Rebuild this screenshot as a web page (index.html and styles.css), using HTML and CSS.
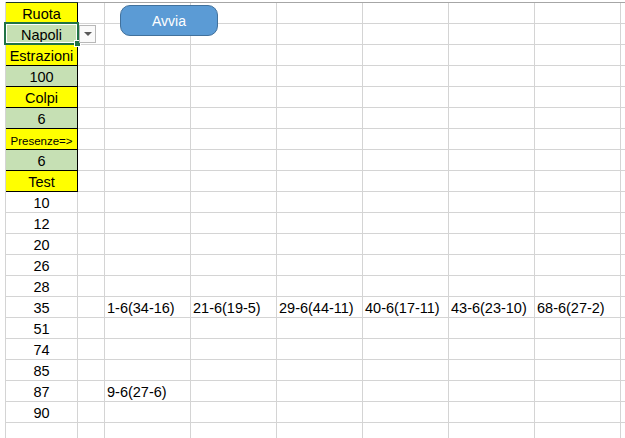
FILE: index.html
```html
<!DOCTYPE html>
<html lang="it">
<head>
    <meta charset="UTF-8">
    <title>Lotto - Presenze</title>
    <link rel="stylesheet" href="styles.css">
</head>
<body>
    <div class="sheet">
        <div class="grid">
            <div class="cell y first">Ruota</div><div class="cell"></div><div class="cell"></div><div class="cell"></div><div class="cell"></div><div class="cell"></div><div class="cell"></div><div class="cell"></div><div class="cell"></div>
            <div class="cell g">Napoli</div><div class="cell"></div><div class="cell"></div><div class="cell"></div><div class="cell"></div><div class="cell"></div><div class="cell"></div><div class="cell"></div><div class="cell"></div>
            <div class="cell y">Estrazioni</div><div class="cell"></div><div class="cell"></div><div class="cell"></div><div class="cell"></div><div class="cell"></div><div class="cell"></div><div class="cell"></div><div class="cell"></div>
            <div class="cell g">100</div><div class="cell"></div><div class="cell"></div><div class="cell"></div><div class="cell"></div><div class="cell"></div><div class="cell"></div><div class="cell"></div><div class="cell"></div>
            <div class="cell y">Colpi</div><div class="cell"></div><div class="cell"></div><div class="cell"></div><div class="cell"></div><div class="cell"></div><div class="cell"></div><div class="cell"></div><div class="cell"></div>
            <div class="cell g">6</div><div class="cell"></div><div class="cell"></div><div class="cell"></div><div class="cell"></div><div class="cell"></div><div class="cell"></div><div class="cell"></div><div class="cell"></div>
            <div class="cell y small">Presenze=&gt;</div><div class="cell"></div><div class="cell"></div><div class="cell"></div><div class="cell"></div><div class="cell"></div><div class="cell"></div><div class="cell"></div><div class="cell"></div>
            <div class="cell g">6</div><div class="cell"></div><div class="cell"></div><div class="cell"></div><div class="cell"></div><div class="cell"></div><div class="cell"></div><div class="cell"></div><div class="cell"></div>
            <div class="cell y">Test</div><div class="cell"></div><div class="cell"></div><div class="cell"></div><div class="cell"></div><div class="cell"></div><div class="cell"></div><div class="cell"></div><div class="cell"></div>
            <div class="cell num">10</div><div class="cell"></div><div class="cell"></div><div class="cell"></div><div class="cell"></div><div class="cell"></div><div class="cell"></div><div class="cell"></div><div class="cell"></div>
            <div class="cell num">12</div><div class="cell"></div><div class="cell"></div><div class="cell"></div><div class="cell"></div><div class="cell"></div><div class="cell"></div><div class="cell"></div><div class="cell"></div>
            <div class="cell num">20</div><div class="cell"></div><div class="cell"></div><div class="cell"></div><div class="cell"></div><div class="cell"></div><div class="cell"></div><div class="cell"></div><div class="cell"></div>
            <div class="cell num">26</div><div class="cell"></div><div class="cell"></div><div class="cell"></div><div class="cell"></div><div class="cell"></div><div class="cell"></div><div class="cell"></div><div class="cell"></div>
            <div class="cell num">28</div><div class="cell"></div><div class="cell"></div><div class="cell"></div><div class="cell"></div><div class="cell"></div><div class="cell"></div><div class="cell"></div><div class="cell"></div>
            <div class="cell num">35</div><div class="cell"></div><div class="cell">1-6(34-16)</div><div class="cell">21-6(19-5)</div><div class="cell">29-6(44-11)</div><div class="cell">40-6(17-11)</div><div class="cell">43-6(23-10)</div><div class="cell">68-6(27-2)</div><div class="cell"></div>
            <div class="cell num">51</div><div class="cell"></div><div class="cell"></div><div class="cell"></div><div class="cell"></div><div class="cell"></div><div class="cell"></div><div class="cell"></div><div class="cell"></div>
            <div class="cell num">74</div><div class="cell"></div><div class="cell"></div><div class="cell"></div><div class="cell"></div><div class="cell"></div><div class="cell"></div><div class="cell"></div><div class="cell"></div>
            <div class="cell num">85</div><div class="cell"></div><div class="cell"></div><div class="cell"></div><div class="cell"></div><div class="cell"></div><div class="cell"></div><div class="cell"></div><div class="cell"></div>
            <div class="cell num">87</div><div class="cell"></div><div class="cell">9-6(27-6)</div><div class="cell"></div><div class="cell"></div><div class="cell"></div><div class="cell"></div><div class="cell"></div><div class="cell"></div>
            <div class="cell num">90</div><div class="cell"></div><div class="cell"></div><div class="cell"></div><div class="cell"></div><div class="cell"></div><div class="cell"></div><div class="cell"></div><div class="cell"></div>
            <div class="cell"></div><div class="cell"></div><div class="cell"></div><div class="cell"></div><div class="cell"></div><div class="cell"></div><div class="cell"></div><div class="cell"></div><div class="cell"></div>
        </div>

        <!-- oggetti sopra il foglio -->
        <div class="selection"></div>
        <div class="handle"></div>
        <div class="dropdown"><span class="arrow"></span></div>
        <button class="avvia">Avvia</button>
    </div>
</body>
</html>
```

FILE: styles.css
```css
body {
    margin: 0;
    background: #fff;
    overflow: hidden;
    font-family: "Liberation Sans", Arial, sans-serif;
}
.sheet {
    position: relative;
    width: 625px;
    height: 438px;
    overflow: hidden;
}
.grid {
    display: grid;
    grid-template-columns: 72px 27px repeat(7, 86px);
    grid-auto-rows: 21px;
    margin: 2px 0 0 5px;
    border-top: 1px solid #a6a6a6;
    border-left: 1px solid #d4d4d4;
    width: max-content;
}
.cell {
    box-sizing: border-box;
    border-right: 1px solid #d4d4d4;
    border-bottom: 1px solid #d4d4d4;
    padding: 2px 2px 0;
    font-size: 14.5px;
    line-height: 18px;
    color: #000;
    white-space: nowrap;
    overflow: hidden;
}
.y {
    background: #ffff00;
    border-right-color: #000;
    border-bottom-color: #000;
    text-align: center;
}
.g {
    background: #c6e0b4;
    border-right-color: #000;
    border-bottom-color: #000;
    text-align: center;
}
.first {
    box-shadow: 0 -1px 0 #1f3a2a;
}
.small {
    font-size: 11.5px;
    padding-top: 3px;
}
.num {
    text-align: center;
}
.selection {
    position: absolute;
    left: 4px;
    top: 22px;
    width: 75px;
    height: 23px;
    box-sizing: border-box;
    border: 2px solid #217346;
    box-shadow: inset 0 0 0 1px #fff;
}
.handle {
    position: absolute;
    left: 74px;
    top: 40px;
    width: 7px;
    height: 7px;
    box-sizing: border-box;
    background: #217346;
    border: 1px solid #fff;
}
.dropdown {
    position: absolute;
    left: 79px;
    top: 25px;
    width: 17px;
    height: 18px;
    box-sizing: border-box;
    border: 1px solid #b8b8b8;
    background: #fafafa;
    display: flex;
    align-items: center;
    justify-content: center;
}
.arrow {
    width: 0;
    height: 0;
    border-left: 4px solid transparent;
    border-right: 4px solid transparent;
    border-top: 4px solid #595959;
}
.avvia {
    position: absolute;
    left: 120px;
    top: 5px;
    width: 98px;
    height: 31px;
    box-sizing: border-box;
    border: 1px solid #41719c;
    border-radius: 10px;
    background: #5b9bd5;
    color: #fff;
    font-family: "Liberation Sans", Arial, sans-serif;
    font-size: 14px;
    padding: 0;
}
```
